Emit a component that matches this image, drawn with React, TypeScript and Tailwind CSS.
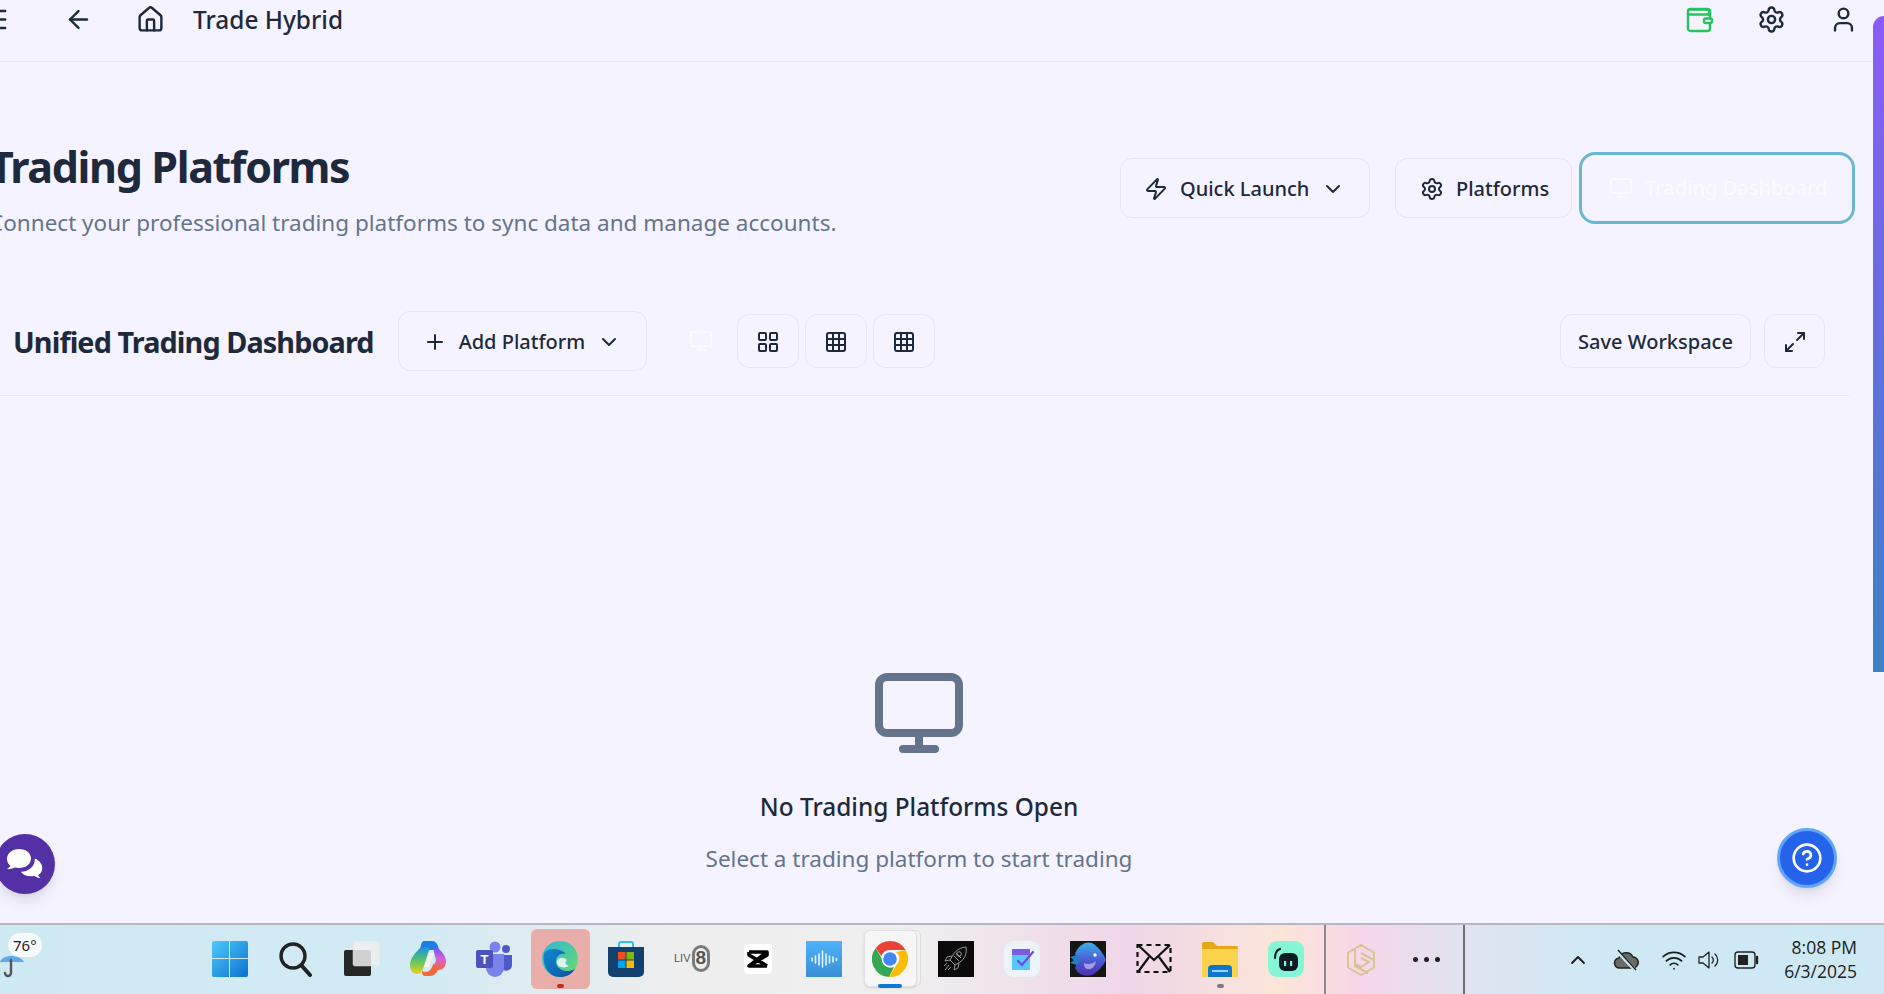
import { ReactNode } from 'react';
import {
  ArrowLeft, ChevronDown, ChevronUp, CircleHelp, Grid3x3, House, LayoutGrid, Maximize2, Menu, Monitor, Plus, Settings, User, Wifi, Zap,
} from 'lucide-react';

const BTN = 'flex items-center rounded-xl border border-[#e4e6f3] bg-[#f5f3ff] pt-[2px] text-[#1e293b] text-[20px] font-medium shrink-0';

function WalletIcon() {
  return (
    <svg width="28" height="28" viewBox="0 0 28 28" fill="none" stroke="#22c55e" strokeWidth="2.4" strokeLinecap="round" strokeLinejoin="round">
      <path d="M23 9V5.5A2 2 0 0 0 21 3.5H4.5" />
      <rect x="2" y="3" width="22" height="22" rx="2.5" />
      <path d="M2.5 8.5H23" />
      <rect x="18" y="12.5" width="8" height="4.5" rx="1.8" fill="#f5f3ff" />
    </svg>
  );
}

function Slot({ children, active, dot }: { children: ReactNode; active?: 'edge' | 'chrome'; dot?: boolean }) {
  return (
    <div className="relative flex h-[71px] w-[66px] shrink-0 items-center justify-center">
      {active === 'edge' && <div className="absolute left-[4px] top-[5px] h-[60px] w-[59px] rounded-md bg-[#e9aeaa]" />}
      {active === 'chrome' && (
        <>
          <div className="absolute left-[11px] top-[6px] h-[57px] w-[53px] rounded-md border border-[#dcdcdc] bg-[#f4f4f4]" />
          <div className="absolute left-[7px] top-[6px] h-[57px] w-[53px] rounded-md border border-[#e2e2e2] bg-[#f6f6f6] shadow-sm" />
          <div className="absolute left-[21px] top-[60px] h-[4px] w-[24px] rounded-full bg-[#0f78d4]" />
        </>
      )}
      {active === 'edge' && <div className="absolute left-[30px] top-[60px] h-[4px] w-[7px] rounded-full bg-[#c42b1c]" />}
      {dot && <div className="absolute left-[30px] top-[60px] h-[4px] w-[7px] rounded-full bg-[#7d7d7d]" />}
      <div className="relative -mt-[2px] flex h-9 w-9 items-center justify-center">{children}</div>
    </div>
  );
}

function Tile({ fill, children }: { fill: string; children: ReactNode }) {
  return (
    <svg width="36" height="36" viewBox="0 0 36 36" fill="none">
      <rect width="36" height="36" fill={fill} />
      {children}
    </svg>
  );
}

function TaskbarIcons() {
  return (
    <>
      <Slot>
        <svg width="36" height="36" viewBox="0 0 36 36">
          <defs>
            <linearGradient id="win" x1="0" y1="0" x2="1" y2="1">
              <stop offset="0" stopColor="#4fc8fb" />
              <stop offset="1" stopColor="#0a72d0" />
            </linearGradient>
          </defs>
          <path fill="url(#win)" d="M2 0h15v17H0V2a2 2 0 0 1 2-2zM18 0h16a2 2 0 0 1 2 2v15H18zM0 18h17v18H2a2 2 0 0 1-2-2zM18 18h18v16a2 2 0 0 1-2 2H18z" />
        </svg>
      </Slot>
      <Slot>
        <svg width="36" height="36" viewBox="0 0 36 36" fill="none" stroke="#222" strokeLinecap="round">
          <circle cx="15" cy="15" r="12" strokeWidth="3.4" />
          <path d="M24 25l8 9" strokeWidth="4" />
        </svg>
      </Slot>
      <Slot>
        <svg width="36" height="36" viewBox="0 0 36 36">
          <rect x="0" y="9" width="27" height="26" rx="2" fill="#262626" />
          <rect x="9" y="0" width="27" height="25" rx="2" fill="#f0f0f0" fillOpacity="0.85" stroke="#ddd" strokeWidth="0.5" />
        </svg>
      </Slot>
      <Slot>
        <svg width="36" height="36" viewBox="0 0 36 36" fill="none">
          <defs>
            <linearGradient id="cp1" x1="0" y1="0" x2="0" y2="1">
              <stop offset="0" stopColor="#1a8fe3" />
              <stop offset="0.55" stopColor="#63c95f" />
              <stop offset="1" stopColor="#f5cf1c" />
            </linearGradient>
            <linearGradient id="cp2" x1="0" y1="0" x2="0" y2="1">
              <stop offset="0" stopColor="#6a5cf0" />
              <stop offset="0.5" stopColor="#d85fd6" />
              <stop offset="1" stopColor="#f4663a" />
            </linearGradient>
          </defs>
          <path fill="#1c7fe0" d="M14 0h8c3 0 5 2 6 5l1 4H10l1-5c.5-2 1.500-4 3-4z" />
          <path fill="url(#cp1)" d="M11 6h9l-7 22c-1 3-3 5-6 5-4 0-7-3-7-9 0-7 6-13 11-18z" />
          <path fill="url(#cp2)" d="M23 7h5c4 4 8 8 8 13 0 6-3 9-8 9h-5l3-10z" />
          <path fill="#f4663a" d="M12 30c3 2 7 1 9-2l3-6 4 7c-2 4-5 6-8 6h-5c-2 0-3-2-3-5z" />
          <path fill="#f6f1ef" d="M19 12h5l-5 14h-5z" />
        </svg>
      </Slot>
      <Slot>
        <svg width="36" height="36" viewBox="0 0 36 36">
          <circle cx="19" cy="6" r="5.5" fill="#7b83eb" />
          <circle cx="30" cy="8" r="4" fill="#5059c9" />
          <path fill="#5059c9" d="M25 14h11v10a6 6 0 0 1-11 3z" />
          <path fill="#7b83eb" d="M10 13h18v14a9 9 0 0 1-18 0z" />
          <rect x="0" y="9" width="17" height="18" rx="2" fill="#4b53bc" />
          <text x="8.5" y="23" textAnchor="middle" fill="#fff" fontSize="13" fontWeight="700" fontFamily="Liberation Sans">T</text>
        </svg>
      </Slot>
      <Slot active="edge">
        <svg width="36" height="36" viewBox="0 0 36 36">
          <defs>
            <linearGradient id="ed1" x1="0" y1="0" x2="1" y2="1">
              <stop offset="0" stopColor="#2fb7d9" />
              <stop offset="1" stopColor="#6bdc6a" />
            </linearGradient>
            <linearGradient id="ed2" x1="0" y1="0" x2="1" y2="1">
              <stop offset="0" stopColor="#138ad4" />
              <stop offset="1" stopColor="#0c4f9e" />
            </linearGradient>
          </defs>
          <circle cx="18" cy="18" r="18" fill="url(#ed1)" />
          <path fill="url(#ed2)" d="M2 12C0 24 6 36 18 36c6 0 11-2 15-8-4 2-9 3-13 1-5-2-8-8-5-13 2-3 6-4 9-3-5-6-18-7-22-1z" />
          <path fill="#eaf6fb" d="M25 19c-3-3-9-3-10 1-1 3 2 6 4 6 3 1 6 0 8-1-3-1-5-3-2-6z" fillOpacity="0.9" />
        </svg>
      </Slot>
      <Slot>
        <svg width="36" height="36" viewBox="0 0 36 36">
          <path d="M11 9V3a2 2 0 0 1 2-2h10a2 2 0 0 1 2 2v6" fill="none" stroke="#2cc2ea" strokeWidth="2" />
          <path fill="#12406f" d="M0 6h36v25a5 5 0 0 1-5 5H5a5 5 0 0 1-5-5z" />
          <rect x="10" y="11" width="7.5" height="7.5" fill="#f25022" />
          <rect x="18.5" y="11" width="7.5" height="7.5" fill="#7fba00" />
          <rect x="10" y="19.5" width="7.5" height="7.5" fill="#00a4ef" />
          <rect x="18.5" y="19.5" width="7.5" height="7.5" fill="#ffb900" />
        </svg>
      </Slot>
      <Slot>
        <div className="relative flex h-9 w-9 items-center justify-end font-['Liberation_Sans'] text-[#555]">
          <span className="mr-[1px] text-[11px] font-normal">LIV</span>
          <span className="flex h-[27px] w-[22px] items-center justify-center rounded-full border-[3px] border-[#7a7a7a] text-[19px] font-bold">8</span>
        </div>
      </Slot>
      <Slot>
        <svg width="28" height="30" viewBox="0 0 28 30">
          <rect width="28" height="30" rx="4" fill="#fff" />
          <path d="M5 8h18L5 22h18M5 8v3l18 11M23 8v3L5 22" fill="none" stroke="#000" strokeWidth="3.6" strokeLinejoin="round" />
        </svg>
      </Slot>
      <Slot>
        <svg width="36" height="36" viewBox="0 0 36 36">
          <defs>
            <linearGradient id="au" x1="0" y1="0" x2="0" y2="1">
              <stop offset="0" stopColor="#4db2fb" />
              <stop offset="1" stopColor="#3b8fd4" />
            </linearGradient>
          </defs>
          <rect width="36" height="36" fill="url(#au)" />
          <path stroke="#e6f4ff" strokeWidth="1.6" strokeLinecap="round" d="M6 17v3M9.5 15v7M13 13v11M16.500 10v16M20 13v11M23.500 15v7M27 16v5M30.500 17.500v2" />
        </svg>
      </Slot>
      <Slot active="chrome">
        <svg width="36" height="36" viewBox="0 0 36 36">
          <path fill="#ea4335" d="M18 0a18 18 0 0 1 15.600 9H18a9 9 0 0 0-8.600 6.300L3.800 6.900A18 18 0 0 1 18 0z" />
          <path fill="#34a853" d="M3.800 6.900 11 19.500A8 8 0 0 0 22 26l-5 10A18 18 0 0 1 3.800 6.900z" />
          <path fill="#fbbc05" d="M33.600 9A18 18 0 0 1 17 36l7.700-12.500A8 8 0 0 0 24 11z" />
          <circle cx="18" cy="18" r="8.400" fill="#fff" />
          <circle cx="18" cy="18" r="6.800" fill="#4285f4" />
        </svg>
      </Slot>
      <Slot>
        <Tile fill="#0b0b0b">
          <g stroke="#a8a8a8" strokeWidth="0.9" fill="none" strokeLinejoin="round">
            <path d="M28 6c-5 .5-10 3-13 8l-3 5 5 5 5-3c5-3 7-9 6-15z" />
            <path d="M14 15l-5 1-2 4 5-1M21 22l-1 5-4 2 1-5M11 24l-4 5M13 26l-3 3M9 22l-3 3" />
            <circle cx="21" cy="13" r="2.300" />
            <path d="M16 15l5 5M18 12l5 5" />
          </g>
        </Tile>
      </Slot>
      <Slot>
        <svg width="36" height="36" viewBox="0 0 36 36">
          <rect width="36" height="36" rx="9" fill="#edf3fb" />
          <rect x="8" y="8" width="18" height="6" fill="#7b5ce6" />
          <rect x="8" y="14" width="18" height="15" fill="#56c7fb" />
          <path d="M14 20l4 4 11-13" fill="none" stroke="#6a4be0" strokeWidth="2.200" strokeLinecap="round" />
        </svg>
      </Slot>
      <Slot>
        <svg width="36" height="36" viewBox="0 0 36 36">
          <defs>
            <linearGradient id="fi" x1="0" y1="0" x2="0" y2="1">
              <stop offset="0" stopColor="#3ab2e8" />
              <stop offset="0.5" stopColor="#4a5fd8" />
              <stop offset="1" stopColor="#4c2fb0" />
            </linearGradient>
          </defs>
          <rect width="36" height="36" fill="#151515" />
          <path fill="url(#fi)" d="M5 13C8 4 18-2 25 4c5 4 9 10 11 15-3 6-8 12-14 15-7 2-14 0-17-7 2-4 2-9 0-14z" />
          <path fill="#1f7fc9" d="M0 16l7-2 3 5-3 5-7-2 4-3z" />
          <circle cx="25" cy="14" r="1.700" fill="#fff" />
          <path fill="#a99be8" d="M14 22c4 2 9 1 12-2-1 5-4 9-8 8-3 0-4-3-4-6z" />
        </svg>
      </Slot>
      <Slot>
        <svg width="36" height="36" viewBox="0 0 36 36" fill="none" stroke="#111" strokeWidth="2.200">
          <rect x="1.500" y="4" width="33" height="27" strokeDasharray="5 4" />
          <path d="M2 4l16 15L34 4M2 31l11-15M34 31L23 16" />
        </svg>
      </Slot>
      <Slot dot>
        <svg width="36" height="36" viewBox="0 0 36 36">
          <path fill="#e6a817" d="M0 3a2 2 0 0 1 2-2h9l4 4h19a2 2 0 0 1 2 2v6H0z" />
          <path fill="#fcd34d" d="M0 8h36v28H0z" />
          <path fill="#0a78d1" d="M6 36V28a4 4 0 0 1 4-4h16a4 4 0 0 1 4 4v8z" />
          <rect x="10" y="29" width="16" height="2" fill="#9fd3f5" />
        </svg>
      </Slot>
      <Slot>
        <svg width="36" height="36" viewBox="0 0 36 36">
          <rect width="36" height="36" rx="9" fill="#84f5d5" />
          <path d="M7 17c0-5 2-8 5-9" stroke="#0c1c22" strokeWidth="2.200" fill="none" strokeLinecap="round" />
          <rect x="11" y="12" width="19" height="18" rx="6" fill="#0c1c22" />
          <rect x="16" y="20" width="2.200" height="5" fill="#84f5d5" />
          <rect x="22" y="20" width="2.200" height="5" fill="#84f5d5" />
        </svg>
      </Slot>
    </>
  );
}

function TrayIcons() {
  return (
    <div className="ml-[104px] flex items-center gap-[23px] text-[#1c1c1c]">
      <ChevronUp className="h-[24px] w-[24px] -mx-[3px]" strokeWidth={1.8} />
      <svg width="26" height="26" viewBox="0 0 26 26" className="ml-[3px]">
        <path d="M7 21a5 5 0 0 1-1-10 7.500 7.500 0 0 1 14-1 5.500 5.500 0 0 1-.5 11z" fill="#6a6a6a" stroke="#222" strokeWidth="1.500" />
        <path d="M4 4l18 19" stroke="#cfe9f3" strokeWidth="3.500" />
        <path d="M5 3l18 20" stroke="#222" strokeWidth="1.400" />
      </svg>
      <Wifi className="-ml-[1px] h-[26px] w-[26px]" strokeWidth={1.6} />
      <svg width="24" height="24" viewBox="0 0 24 24" fill="none" stroke="#222" strokeWidth="1.300" className="-ml-[13px]">
        <path d="M2 9h4l6-5v16l-6-5H2z" strokeLinejoin="round" />
        <path d="M15 9a4 4 0 0 1 0 6M18 6a8 8 0 0 1 0 12" strokeLinecap="round" />
      </svg>
      <svg width="25" height="18" viewBox="0 0 25 18" fill="none" className="-ml-[10px]">
        <rect x="1" y="1" width="20" height="16" rx="3" stroke="#222" strokeWidth="1.400" />
        <rect x="4" y="4" width="10" height="10" fill="#222" />
        <path d="M23 6v6" stroke="#222" strokeWidth="2.400" strokeLinecap="round" />
      </svg>
    </div>
  );
}

export default function App() {
  return (
    <div className="relative flex h-screen w-full flex-col overflow-hidden bg-[#f5f3ff] font-['Noto_Sans',sans-serif]">
      {/* Top bar */}
      <header className="flex h-[62px] shrink-0 items-start border-b border-[#e7e6f2] pt-[5px] text-[#1e293b]">
        <Menu className="-ml-[19px] h-[29px] w-[29px] shrink-0" strokeWidth={2} />
        <ArrowLeft className="ml-[54px] h-[29px] w-[29px] shrink-0" strokeWidth={2} />
        <House className="ml-[43px] h-[29px] w-[29px] shrink-0" strokeWidth={2} />
        <span className="-mt-[1px] ml-[28px] text-[24.400px] font-medium leading-[32px]">Trade Hybrid</span>
        <div className="ml-auto mr-[26px] flex items-center gap-[43px]">
          <WalletIcon />
          <Settings className="h-[29px] w-[29px]" strokeWidth={2} />
          <User className="h-[29px] w-[29px]" strokeWidth={2} />
        </div>
      </header>

      {/* Page */}
      <main className="-ml-[11px] flex min-h-0 w-[1860px] flex-1 flex-col">
        <div className="mt-[90px] flex h-[72px] w-[1866px] items-center justify-between">
          <div className="mt-[5px]">
            <h1 className="text-[43px] font-bold leading-[48px] tracking-[-1.350px] text-[#1e293b]">Trading Platforms</h1>
            <p className="mt-[17px] text-[22.500px] leading-[30px] text-[#64748b]">Connect your professional trading platforms to sync data and manage accounts.</p>
          </div>
          <div className="flex items-center">
            <button className={`${BTN} h-[60px] w-[250px] pl-[23px]`}>
              <Zap className="h-6 w-6" strokeWidth={2} />
              <span className="ml-[12px]">Quick Launch</span>
              <ChevronDown className="ml-[12px] h-6 w-6" strokeWidth={2} />
            </button>
            <button className={`${BTN} ml-[25px] h-[60px] w-[177px] pl-[24px]`}>
              <Settings className="h-6 w-6" strokeWidth={2} />
              <span className="ml-[12px]">Platforms</span>
            </button>
            <button className="ml-[7px] flex h-[72px] w-[276px] shrink-0 items-center rounded-2xl border-[3px] border-[#69b8d2] pl-[27px] text-[20px] font-medium text-[#fbfaff]">
              <Monitor className="h-6 w-6" strokeWidth={2} />
              <span className="ml-[12px]">Trading Dashboard</span>
            </button>
          </div>
        </div>

        <div className="mt-[87px] flex h-[85px] items-start border-b border-[#e7e6f2] px-[24px]">
          <h2 className="mt-[13px] text-[28.800px] font-bold leading-[36px] tracking-[-0.900px] text-[#1e293b]">Unified Trading Dashboard</h2>
          <button className={`${BTN} ml-[24px] h-[60px] w-[249px] pl-[24px]`}>
            <Plus className="h-6 w-6" strokeWidth={2} />
            <span className="ml-[12px]">Add Platform</span>
            <ChevronDown className="ml-[12px] h-6 w-6" strokeWidth={2} />
          </button>
          <Monitor className="ml-[42px] mt-[18px] h-6 w-6 text-[#fbfaff]" strokeWidth={2} />
          <div className="ml-[24px] mt-[3px] flex gap-[6px]">
            <button className={`${BTN} h-[54px] w-[62px] justify-center`}><LayoutGrid className="h-6 w-6" strokeWidth={2} /></button>
            <button className={`${BTN} h-[54px] w-[62px] justify-center`}><Grid3x3 className="h-6 w-6" strokeWidth={2} /></button>
            <button className={`${BTN} h-[54px] w-[62px] justify-center`}><Grid3x3 className="h-6 w-6" strokeWidth={2} /></button>
          </div>
          <div className="ml-auto mt-[3px] flex gap-[13px]">
            <button className={`${BTN} h-[54px] w-[191px] justify-center`}>Save Workspace</button>
            <button className={`${BTN} h-[54px] w-[61px] justify-center`}><Maximize2 className="h-6 w-6" strokeWidth={2} /></button>
          </div>
        </div>

        <div className="flex flex-1 flex-col items-center pt-[269px]">
          <Monitor className="h-24 w-24 text-[#64748b]" strokeWidth={2} />
          <h3 className="mt-[30px] text-[24.400px] font-medium leading-[32px] text-[#1e293b]">No Trading Platforms Open</h3>
          <p className="mt-[20px] text-[22.500px] leading-[32px] text-[#64748b]">Select a trading platform to start trading</p>
        </div>
      </main>

      {/* Taskbar */}
      <footer className="flex h-[71px] shrink-0 items-center border-t-[2px] border-[#b7b7bf] bg-[linear-gradient(90deg,#cfe9f3_0%,#d2eaf3_22%,#eeeeee_36%,#efefef_48%,#efd6e8_60%,#fbe6d8_68%,#f7d6e8_72%,#dfe4f0_78%,#cfe9f4_85%,#cfe9f4_100%)]">
        <div className="ml-[197px] flex">
          <TaskbarIcons />
        </div>
        <div className="ml-[5px] h-full w-[2px] bg-[#8a8a8a]" />
        <svg width="28" height="32" viewBox="0 0 28 32" fill="none" stroke="#d7c48f" strokeWidth="2" className="ml-[21px]">
          <path d="M14 1l13 7.500v15L14 31 1 23.500v-15zM8 5v17l13 7M14 9l13 7M14 14l8 4-8 5-6-3" strokeLinejoin="round" />
        </svg>
        <div className="ml-[38px] flex gap-[6px]">
          <span className="h-[5px] w-[5px] rounded-full bg-[#222]" />
          <span className="h-[5px] w-[5px] rounded-full bg-[#222]" />
          <span className="h-[5px] w-[5px] rounded-full bg-[#222]" />
        </div>
        <div className="ml-[23px] h-full w-[2px] bg-[#6e6e6e]" />
        <TrayIcons />
        <div className="ml-auto mr-[27px] -mt-[2px] text-right text-[17.500px] leading-[24px] text-[#1c1c1c] font-['Open_Sans',sans-serif]">
          <div>8:08 PM</div>
          <div>6/3/2025</div>
        </div>
      </footer>

      {/* Weather */}
      <div className="absolute bottom-[37px] left-[8px] rounded-full bg-[#f7fbfd] px-[5px] text-[15px] leading-[24px] text-[#1c1c1c]">76°</div>
      <svg width="26" height="28" viewBox="0 0 26 28" fill="none" className="absolute bottom-[16px] -left-[1px]">
        <path d="M1 12C3 4 21 4 25 12z" fill="#5fa9e8" />
        <path d="M12 10v13a3 3 0 0 1-6 0" stroke="#555" strokeWidth="2.400" strokeLinecap="round" />
      </svg>

      {/* Scrollbar */}
      <div className="absolute right-0 top-[16px] h-[656px] w-[11px] rounded-tl-full bg-[linear-gradient(180deg,#8b5cf6_0%,#3b82c6_100%)]" />

      {/* Chat */}
      <button className="absolute -left-[5px] top-[834px] flex h-[60px] w-[60px] items-center justify-center rounded-full bg-[#5330a6] shadow-lg">
        <svg width="38" height="32" viewBox="0 0 38 32" fill="#fff">
          <path d="M13 1C6 1 1 5.500 1 11c0 3 1.500 5.500 3.500 7.200L1 21c3 .5 6-.5 8-1.500 1.300.3 2.600.5 4 .5 7 0 12-4 12-9.500S20 1 13 1z" />
          <path stroke="#5330a6" strokeWidth="1.500" d="M27 9c.5.7 1 1.600 1 3 0 6-6 11-13 11l-1.500-.2C15.500 27 20 29 25 29c1 0 2-.1 3-.4 2 1.400 5 2.400 8 2.400l-3-3.700c3-1.800 4-4.300 4-7.300 0-5-4-9.500-10-11z" />
        </svg>
      </button>

      {/* Help */}
      <button className="absolute left-[1777px] top-[828px] flex h-[60px] w-[60px] items-center justify-center rounded-full border-[3px] border-[#60a5fa] bg-[#2563eb] text-white shadow-lg">
        <CircleHelp className="h-[32px] w-[32px]" strokeWidth={2} />
      </button>
    </div>
  );
}
